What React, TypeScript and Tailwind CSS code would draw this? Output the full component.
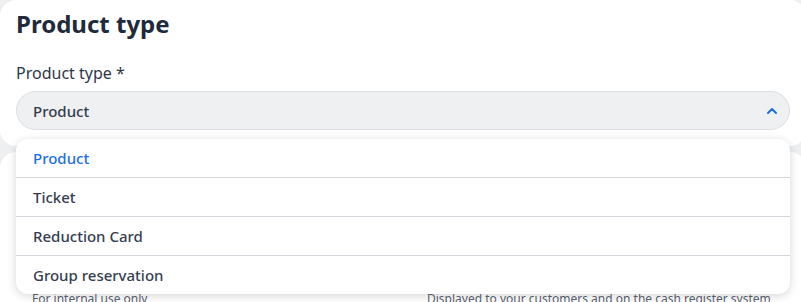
import React from "react";

const items = ["Product", "Ticket", "Reduction Card", "Group reservation"];

export default function App() {
  return (
    <div
      className="w-[801px] h-[302px] overflow-hidden bg-[#eeeff1]"
      style={{ fontFamily: '"Noto Sans", "Open Sans", sans-serif' }}
    >
      <div className="w-[806px]">
        {/* Card 1 */}
        <div className="bg-white rounded-2xl px-4 pt-2 pb-4">
          <h1 className="text-2xl leading-8 font-bold text-[#1f2a3c]">Product type</h1>
          <label className="block mt-[21px] text-base leading-6 text-[#2e3748]">Product type *</label>
          <div className="relative mt-[6px] w-[774px]">
            <div className="h-[39px] rounded-full border border-[#dcdfe4] bg-[#eef0f2] flex items-center justify-between pl-4 pr-[11px]">
              <span className="text-[15px] leading-5 font-medium text-[#333c4d]">Product</span>
              <svg width="12" height="12" viewBox="0 0 12 12" fill="none">
                <polyline points="2,8 6,4 10,8" stroke="#1c6fe0" strokeWidth="2" strokeLinecap="round" strokeLinejoin="round" />
              </svg>
            </div>
            <div className="absolute left-0 right-0 top-[48px] z-10 bg-white rounded-xl shadow-[0_2px_10px_rgba(0,0,0,0.16)] overflow-hidden">
              {items.map((it, i) => (
                <div
                  key={it}
                  className={
                    "flex items-center pl-[17px] text-[15px] font-medium " +
                    (i === 0 ? "h-[38px] text-[#1c6fe0]" : "h-[39px] text-[#353e50] border-t border-[#d4d7dc]")
                  }
                >
                  {it}
                </div>
              ))}
            </div>
          </div>
        </div>

        {/* Card 2 */}
        <div className="mt-[6px] bg-white rounded-2xl px-4 pt-4 h-[200px]">
          <div className="grid grid-cols-2 gap-4 w-[774px]">
            <div className="flex flex-col">
              <div className="h-6" />
              <div className="mt-[6px] h-[39px] rounded-full border border-[#dcdfe4] bg-[#eef0f2]" />
              <div className="mt-[54px] pl-4 text-xs leading-4 text-[#5b6270]">For internal use only</div>
            </div>
            <div className="flex flex-col">
              <div className="h-6" />
              <div className="mt-[6px] h-[39px] rounded-full border border-[#dcdfe4] bg-[#eef0f2]" />
              <div className="mt-[54px] pl-4 text-xs leading-4 text-[#5b6270]">
                Displayed to your customers and on the cash register system
              </div>
            </div>
          </div>
        </div>
      </div>
    </div>
  );
}
